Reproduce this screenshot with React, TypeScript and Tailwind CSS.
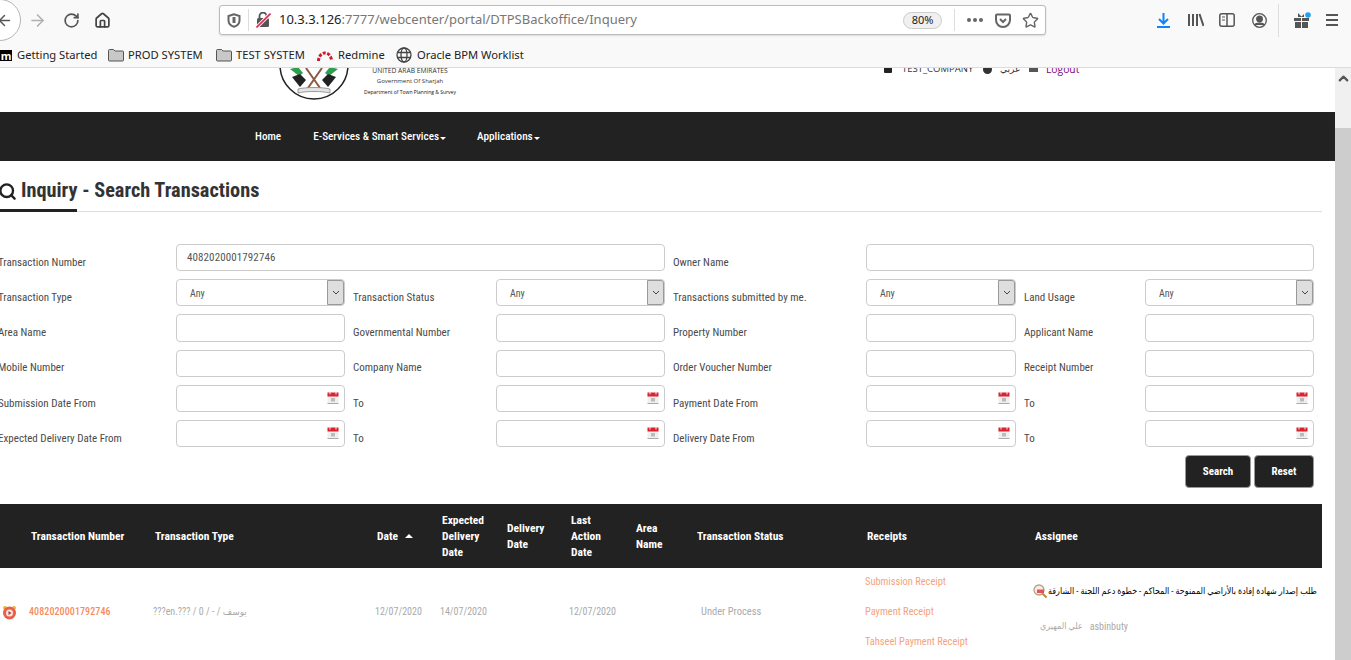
import { ChevronUp, Home, RotateCw, ArrowLeft, ArrowRight, Star, Search } from "lucide-react";

const condensed = "font-['Roboto','DejaVu_Sans',sans-serif] [font-stretch:75%]";

function Label({ text, indent }: { text: string; indent?: boolean }) {
  return (
    <div className={`flex items-center overflow-visible whitespace-nowrap pt-[11px] text-[11px] text-[#4a4a4a] ${indent ? "pl-2" : ""}`}>
      {text}
    </div>
  );
}

function TextInput({ value, span }: { value?: string; span?: boolean }) {
  return (
    <div
      className={`rounded-[4px] border border-[#ccc] bg-white pl-[10px] text-[11px] leading-[25px] tracking-[0.1px] text-[#555] ${span ? "col-span-3" : ""}`}
    >
      {value}
    </div>
  );
}

function SelectBox() {
  return (
    <div className="flex rounded-[4px] border border-[#ccc] bg-white">
      <span className="flex-1 pl-[13px] pt-[1px] text-[10px] leading-[25px] text-[#555]">Any</span>
      <span className="flex w-[17px] items-center justify-center rounded-r-[3px] border border-[#999] bg-[#dedede]">
        <svg width="8" height="5" viewBox="0 0 8 5" fill="none" stroke="#444" strokeWidth="1">
          <path d="M1 1l3 3 3-3" />
        </svg>
      </span>
    </div>
  );
}

function DateInput() {
  return (
    <div className="flex items-start justify-end rounded-[4px] border border-[#ccc] bg-white pr-[5px] pt-[5px]">
      <svg width="12" height="13" viewBox="0 0 12 13">
        <rect x="0.5" y="2" width="11" height="11" fill="#efefef" />
        <rect x="0.5" y="1.5" width="11" height="4" fill="#d9232e" />
        <rect x="2.5" y="0.5" width="1" height="3" fill="#eee" />
        <rect x="8.5" y="0.5" width="1" height="3" fill="#eee" />
        <rect x="4" y="7" width="4" height="3.5" fill="#bbb" />
        <rect x="0.5" y="12" width="11" height="1" fill="#aaa" />
      </svg>
    </div>
  );
}

function FolderIcon() {
  return (
    <svg width="16" height="14" viewBox="0 0 16 14" fill="#c8c8c8" stroke="#555" strokeWidth="1" className="shrink-0">
      <path d="M0.5 2.5a1 1 0 0 1 1-1h4l1.5 1.5h7.5a1 1 0 0 1 1 1v8a1 1 0 0 1-1 1h-13a1 1 0 0 1-1-1z" />
    </svg>
  );
}

function Browser() {
  return (
    <div className="h-[68px] shrink-0 border-b border-[#dcdcdc] bg-[#f9f9fa] font-['Noto_Sans',sans-serif] text-[#222]">
      <div className="flex h-[40px] items-center">
        <div className="-ml-[21px] flex h-[42px] w-[42px] shrink-0 items-center justify-end rounded-full border border-[#b5b5b5] bg-white pr-[7px]">
          <ArrowLeft size={17} strokeWidth={2} className="text-[#555]" />
        </div>
        <ArrowRight size={19} strokeWidth={2} className="ml-[7px] text-[#b0b0b0]" />
        <RotateCw size={17} strokeWidth={2.4} className="ml-[16px] text-[#555]" />
        <Home size={17} strokeWidth={2.4} className="ml-[14px] text-[#444]" />
        <div className="ml-[108px] flex h-[30px] w-[827px] shrink-0 items-center rounded-[3px] border border-[#bbb] bg-white pr-[6px] shadow-[0_1px_2px_rgba(0,0,0,0.12)]">
          <svg width="14" height="15" viewBox="0 0 14 15" className="ml-[7px]" fill="none" stroke="#666" strokeWidth="2">
            <path d="M7 1.2 1.5 3v4.5c0 3 2.5 5.300 5.500 6.300 3-1 5.500-3.300 5.500-6.300V3z" />
            <path d="M7 4v6" stroke="#666" strokeWidth="3" />
          </svg>
          <span className="ml-[7px] mr-[7px] h-[22px] w-px bg-[#ddd]" />
          <svg width="15" height="16" viewBox="0 0 15 16">
            <rect x="1" y="6" width="12" height="9" rx="1.500" fill="#555" />
            <path d="M3.500 6V4a3.500 3.500 0 0 1 7 0v2" fill="none" stroke="#555" strokeWidth="1.800" />
            <path d="M0.500 15.500 14.500 1.500" stroke="#f9f9fa" strokeWidth="3.500" />
            <path d="M0.500 15.500 14.500 1.500" stroke="#e22850" strokeWidth="1.600" />
          </svg>
          <span className="ml-[8px] whitespace-nowrap text-[13px] text-[#222]">
            10.3.3.126<span className="text-[#777]">:7777/webcenter/portal/DTPSBackoffice/Inquery</span>
          </span>
          <span className="ml-auto flex h-[17px] w-[39px] items-center justify-center rounded-full border border-[#ccc] bg-[#f0f0f0] text-[11px]">
            80%
          </span>
          <span className="ml-[12px] h-[22px] w-px bg-[#ddd]" />
          <span className="ml-[12px] flex w-[16px] justify-between">
            <i className="h-[4px] w-[4px] rounded-full bg-[#666]" />
            <i className="h-[4px] w-[4px] rounded-full bg-[#666]" />
            <i className="h-[4px] w-[4px] rounded-full bg-[#666]" />
          </span>
          <svg width="16" height="15" viewBox="0 0 16 15" className="ml-[12px]" fill="none" stroke="#666" strokeWidth="2">
            <path d="M1 2.500a1 1 0 0 1 1-1h12a1 1 0 0 1 1 1v4.500a7 7 0 0 1-14 0z" />
            <path d="M5 6l3 3 3-3" />
          </svg>
          <Star size={17} strokeWidth={2} className="ml-[11px] text-[#666]" />
        </div>
        <svg width="13" height="15" viewBox="0 0 13 15" className="ml-[111px]" fill="none" stroke="#0a84ff" strokeWidth="2">
          <path d="M6.500 0v10M2 6l4.500 4.500L11 6M0 14h13" />
        </svg>
        <svg width="16" height="14" viewBox="0 0 16 14" className="ml-[18px]" fill="none" stroke="#555" strokeWidth="2">
          <path d="M1 1v12M5 1v12M9 1v12M11.500 1l4 12" />
        </svg>
        <svg width="16" height="14" viewBox="0 0 16 14" className="ml-[15px]" fill="none" stroke="#555" strokeWidth="1.500">
          <rect x="0.800" y="0.800" width="14.400" height="12.400" rx="2" />
          <path d="M8 1v12" />
          <path d="M3 4h3M3 7h3" strokeWidth="1" />
        </svg>
        <svg width="15" height="15" viewBox="0 0 15 15" className="ml-[17px]" fill="none" stroke="#555" strokeWidth="1.300">
          <circle cx="7.500" cy="7.500" r="6.800" />
          <circle cx="7.500" cy="6" r="2.800" fill="#555" />
          <path d="M2.800 12c1-2.500 8.400-2.500 9.400 0" fill="#555" />
        </svg>
        <span className="ml-[11px] h-[33px] w-px bg-[#ddd]" />
        <svg width="18" height="17" viewBox="0 0 18 17" className="ml-[14px]">
          <path d="M1 6h7v3H1zM9 6h7v3H9zM2 10h6v6H2zM9 10h6v6H9z" fill="#555" />
          <path d="M5 1l3.500 3.500L11 2v3H5z" fill="#555" />
          <circle cx="15" cy="3" r="2.800" fill="#21a1f3" />
        </svg>
        <span className="ml-[15px] flex h-[12px] w-[12px] flex-col justify-between">
          <i className="h-[2px] bg-[#555]" />
          <i className="h-[2px] bg-[#555]" />
          <i className="h-[2px] bg-[#555]" />
        </span>
      </div>
      <div className="flex h-[28px] items-center pt-[2px] text-[11.200px] whitespace-nowrap">
        <span className="flex h-[11px] w-[12px] shrink-0 items-center justify-center bg-black text-[11px] font-bold leading-none text-white">
          m
        </span>
        <span className="ml-[5px] w-[91px]">Getting Started</span>
        <FolderIcon />
        <span className="ml-[4px] w-[88px]">PROD SYSTEM</span>
        <FolderIcon />
        <span className="ml-[4px] w-[81px]">TEST SYSTEM</span>
        <svg width="16" height="13" viewBox="0 0 16 13" fill="none" stroke="#d5182a" strokeWidth="3" strokeDasharray="3 1.500" className="shrink-0">
          <path d="M1.500 12a6.500 8 0 0 1 13 0" />
        </svg>
        <span className="ml-[5px] w-[58px]">Redmine</span>
        <svg width="16" height="16" viewBox="0 0 16 16" fill="none" stroke="#444" strokeWidth="1.300" className="shrink-0">
          <circle cx="8" cy="8" r="7" />
          <ellipse cx="8" cy="8" rx="3" ry="7" />
          <path d="M1 5.500h14M1 10.500h14" />
        </svg>
        <span className="ml-[5px]">Oracle BPM Worklist</span>
      </div>
    </div>
  );
}

function SiteHeader() {
  return (
    <div className="flex h-[44px] shrink-0 items-start overflow-hidden bg-white font-['Open_Sans','DejaVu_Sans',sans-serif]">
      <svg width="70" height="70" viewBox="0 0 70 70" className="ml-[279px] -mt-[38px] shrink-0">
        <circle cx="35" cy="35" r="34" fill="#fff" stroke="#222" strokeWidth="1.500" />
        <path d="M27 38l14 20M43 38 29 58" stroke="#8a5a44" strokeWidth="2" />
        <path d="M11 39l8-2 5 6-4 3z" fill="#2e9e4f" />
        <path d="M59 39l-8-2-5 6 4 3z" fill="#2e9e4f" />
        <path d="M13 47l8-3 6 6-6 7z" fill="#222" />
        <path d="M57 47l-8-3-6 6 6 7z" fill="#222" />
        <path d="M19 59c8-2 24-2 32 0v4c-8-2-24-2-32 0z" fill="#e4e4e4" stroke="#777" strokeWidth="0.700" />
      </svg>
      <div className="ml-[14px] -mt-[2px] flex w-[94px] shrink-0 flex-col items-center whitespace-nowrap text-[#333]">
        <span className="text-[6.700px] font-medium leading-[10px]">UNITED ARAB EMIRATES</span>
        <span className="text-[6px] font-medium leading-[10px]">Government Of Sharjah</span>
        <span className="mt-[1px] text-[5px] font-medium leading-[10px] text-[#111]">Department of Town Planning &amp; Survey</span>
      </div>
      <div className="ml-[427px] -mt-[6px] flex items-center whitespace-nowrap text-[10.300px] leading-[14px] text-[#333]">
        <span className="h-[8px] w-[8px] rounded-[1px] bg-[#222]" />
        <span className="ml-[10px] w-[71px] text-[9.500px]">TEST_COMPANY</span>
        <span className="ml-[10px] h-[9px] w-[9px] rounded-full bg-[#333]" />
        <span className="ml-[8px] w-[20px] text-[9px]">عربي</span>
        <span className="ml-[9px] h-[6px] w-[9px] bg-[#555]" />
        <span className="ml-[8px] text-[#800080]">Logout</span>
      </div>
    </div>
  );
}

function NavBar() {
  return (
    <div className={`flex h-[49px] shrink-0 items-center bg-[#222] pl-[255px] pt-[2px] text-[11.200px] font-medium text-white ${condensed}`}>
      <span>Home</span>
      <span className="ml-[32px] flex items-center">
        E-Services &amp; Smart Services
        <i className="ml-[1px] mt-[2px] border-x-[3px] border-t-[3px] border-x-transparent border-t-white" />
      </span>
      <span className="ml-[31px] flex items-center">
        Applications
        <i className="ml-[1px] mt-[2px] border-x-[3px] border-t-[3px] border-x-transparent border-t-white" />
      </span>
    </div>
  );
}

const cols = "grid grid-cols-[31px_124px_222px_65px_65px_64px_65px_61px_170px_168px_287px]";

function Results() {
  return (
    <div className={condensed}>
      <div className={`${cols} mt-[16px] h-[64px] items-center bg-[#222] text-[11.500px] font-bold leading-[16px] text-white`}>
        <span />
        <span>Transaction Number</span>
        <span>Transaction Type</span>
        <span className="flex items-center">
          Date
          <i className="ml-[7px] border-x-[4px] border-b-[4px] border-x-transparent border-b-white" />
        </span>
        <span>Expected<br />Delivery<br />Date</span>
        <span>Delivery<br />Date</span>
        <span>Last<br />Action<br />Date</span>
        <span>Area<br />Name</span>
        <span>Transaction Status</span>
        <span>Receipts</span>
        <span>Assignee</span>
      </div>
      <div className={`${cols} -ml-[2px] h-[87px] items-center text-[10px] text-[#aaa]`}>
        <span className="pl-[4px] pt-[1px]">
          <svg width="15" height="15" viewBox="0 0 15 15">
            <circle cx="3" cy="3" r="2" fill="#f5b03c" />
            <circle cx="12" cy="3" r="2" fill="#f5b03c" />
            <circle cx="7.500" cy="8" r="6.500" fill="#e8604c" />
            <circle cx="7.500" cy="8" r="3.500" fill="#f7e6dc" />
            <path d="M6.500 6v4l3-2z" fill="#b33" />
          </svg>
        </span>
        <span className="font-medium tracking-[0.1px] text-[#f58b62]">4082020001792746</span>
        <span>???en.??? / 0 / - / يوسف</span>
        <span>12/07/2020</span>
        <span>14/07/2020</span>
        <span />
        <span>12/07/2020</span>
        <span />
        <span className="whitespace-nowrap pl-[6px] text-[10.500px]">Under Process</span>
        <span className="flex flex-col gap-[18px] text-[10.400px] text-[#f5a27c]">
          <span className="leading-[12px]">Submission Receipt</span>
          <span className="leading-[12px]">Payment Receipt</span>
          <span className="leading-[12px]">Tahseel Payment Receipt</span>
        </span>
        <span className="flex flex-col pb-[5px]">
          <span className="flex items-center whitespace-nowrap text-[8.900px] text-black">
            <svg width="15" height="15" viewBox="0 0 15 15" className="shrink-0">
              <circle cx="6" cy="6" r="5" fill="#f3efe8" stroke="#b9a27e" strokeWidth="1.300" />
              <path d="M9.500 9.500l4 4" stroke="#c08a3e" strokeWidth="2" />
              <rect x="4" y="5.500" width="7" height="3.500" fill="#e8505b" />
            </svg>
            <span dir="rtl">طلب إصدار شهادة إفادة بالأراضي الممنوحة - المحاكم - خطوة دعم اللجنة - الشارقة</span>
          </span>
          <span className="mt-[20px] flex items-center gap-[7px] pl-[7px] whitespace-nowrap">
            <span dir="rtl" className="text-[9px]">علي المهيري</span>
            <span>asbinbuty</span>
          </span>
        </span>
      </div>
    </div>
  );
}

export default function App() {
  return (
    <div className="flex h-[660px] w-[1351px] flex-col overflow-hidden bg-white">
      <Browser />
      <div className="flex min-h-0 flex-1">
        <div className="w-[1335px] shrink-0 overflow-hidden">
          <SiteHeader />
          <NavBar />
          <div className={`mr-[13px] ${condensed}`}>
            <div className="relative flex h-[51px] items-end border-b border-[#ddd] pb-[8px] text-[20.300px] font-bold leading-[26px] text-[#333]">
              <Search size={19} strokeWidth={3} className="mb-[2px] mr-[4px] -ml-[2px] text-[#222]" />
              Inquiry - Search Transactions
              <span className="absolute -bottom-px left-0 h-[3px] w-[77px] bg-[#222]" />
            </div>
            <div className="-ml-[2px] mt-[32px] grid auto-rows-[27.200px] grid-cols-[178px_169px_151px_169px_201px_150px_129px_169px] gap-y-[8px]">
              <Label text="Transaction Number" />
              <TextInput value="4082020001792746" span />
              <Label indent text="Owner Name" />
              <TextInput span />
              <Label text="Transaction Type" />
              <SelectBox />
              <Label indent text="Transaction Status" />
              <SelectBox />
              <Label indent text="Transactions submitted by me." />
              <SelectBox />
              <Label indent text="Land Usage" />
              <SelectBox />
              <Label text="Area Name" />
              <TextInput />
              <Label indent text="Governmental Number" />
              <TextInput />
              <Label indent text="Property Number" />
              <TextInput />
              <Label indent text="Applicant Name" />
              <TextInput />
              <Label text="Mobile Number" />
              <TextInput />
              <Label indent text="Company Name" />
              <TextInput />
              <Label indent text="Order Voucher Number" />
              <TextInput />
              <Label indent text="Receipt Number" />
              <TextInput />
              <Label text="Submission Date From" />
              <DateInput />
              <Label indent text="To" />
              <DateInput />
              <Label indent text="Payment Date From" />
              <DateInput />
              <Label indent text="To" />
              <DateInput />
              <Label text="Expected Delivery Date From" />
              <DateInput />
              <Label indent text="To" />
              <DateInput />
              <Label indent text="Delivery Date From" />
              <DateInput />
              <Label indent text="To" />
              <DateInput />
            </div>
            <div className="mt-[8px] flex justify-end gap-[3px] pr-[8px]">
              <button className="h-[33px] w-[66px] rounded-[4px] border border-[#999] bg-[#222] pt-[2px] text-[11px] font-bold text-white">Search</button>
              <button className="h-[33px] w-[60px] rounded-[4px] border border-[#999] bg-[#222] pt-[2px] text-[11px] font-bold text-white">Reset</button>
            </div>
            <Results />
          </div>
        </div>
        <div className="flex w-[16px] shrink-0 flex-col bg-[#f0f0f0]">
          <div className="flex h-[60px] justify-center pt-[3px]">
            <ChevronUp size={15} strokeWidth={3.500} className="text-[#555]" />
          </div>
          <div className="flex-1 bg-[#cdcdcd]" />
        </div>
      </div>
    </div>
  );
}
